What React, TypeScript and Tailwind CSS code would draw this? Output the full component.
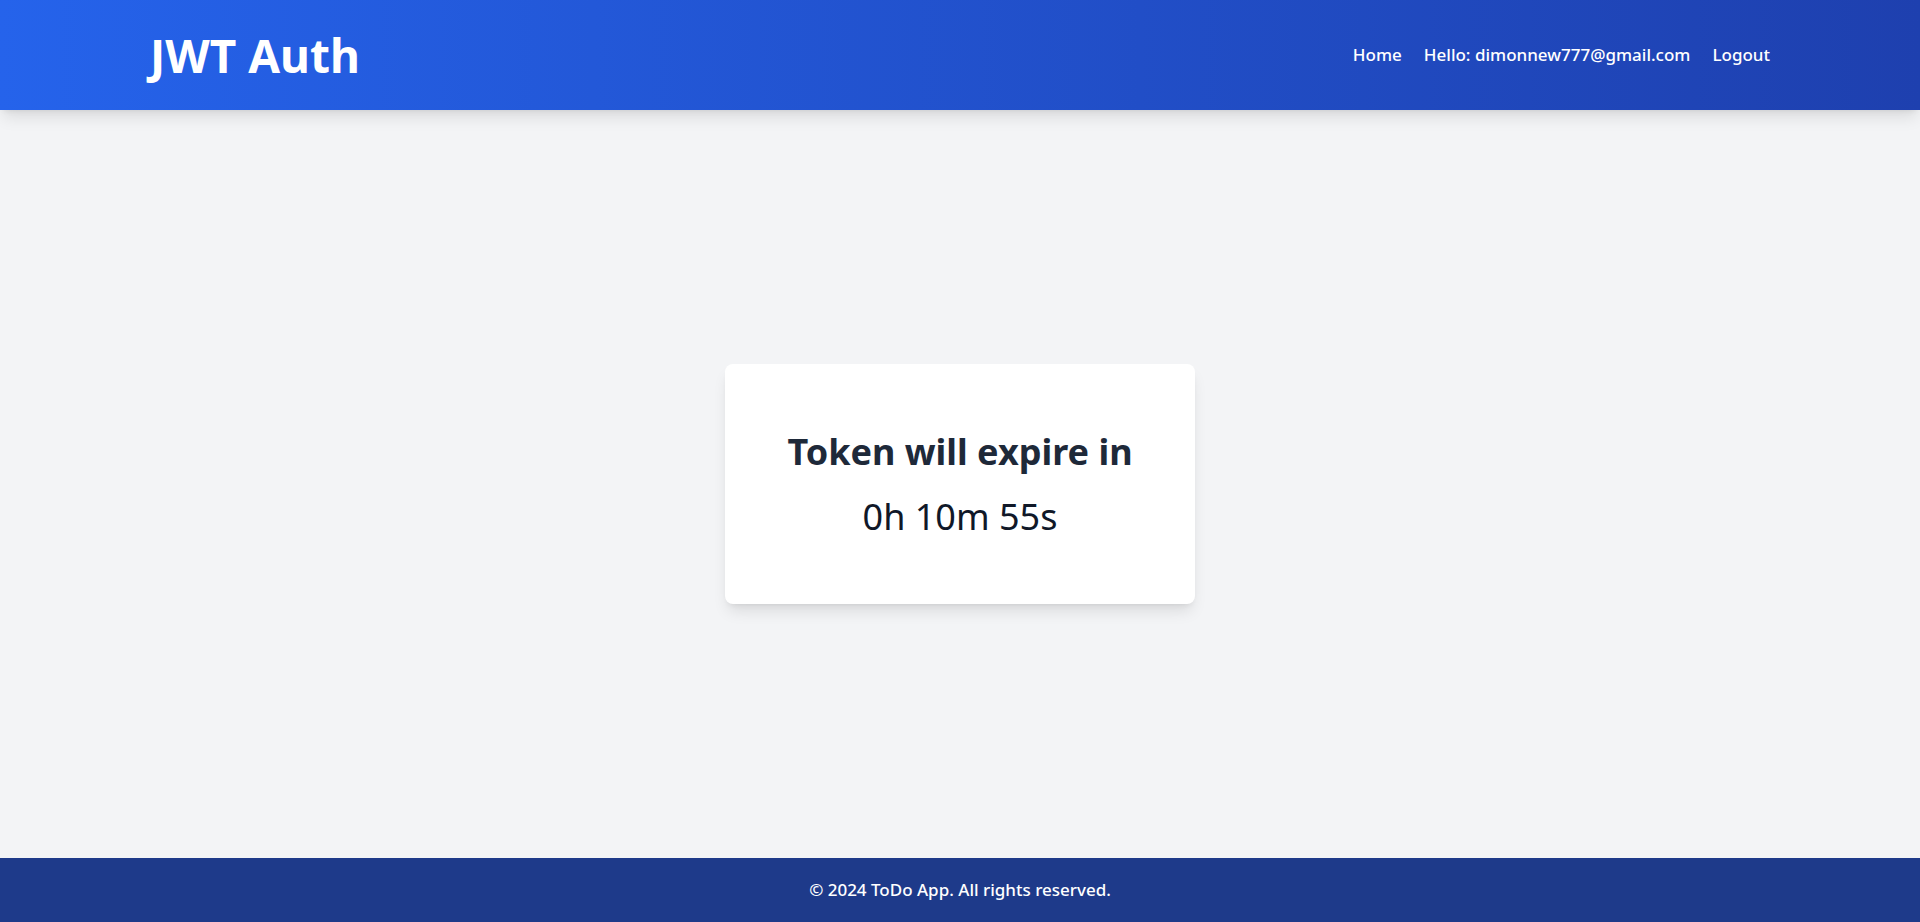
export default function App() {
  return (
    <div
      className="min-h-screen flex flex-col bg-gray-100"
      style={{ fontFamily: '"Noto Sans", "Open Sans", sans-serif' }}
    >
      {/* Header */}
      <header className="h-[110px] bg-gradient-to-r from-[#2563eb] to-[#1e40af] shadow-lg relative z-10">
        <div className="max-w-[1620px] mx-auto h-full flex items-center justify-between">
          <h1 className="text-[46px] font-bold text-white">JWT Auth</h1>
          <nav className="flex items-center gap-[22px] text-[17px] font-medium text-white">
            <a href="#">Home</a>
            <span>Hello: dimonnew777@gmail.com</span>
            <a href="#">Logout</a>
          </nav>
        </div>
      </header>

      {/* Main */}
      <main className="flex-1 flex items-center justify-center">
        <div className="w-[470px] h-[240px] bg-white rounded-lg shadow-lg flex flex-col items-center justify-center">
          <h2 className="text-[36px] font-bold text-gray-800 leading-tight">
            Token will expire in
          </h2>
          <p className="text-[36px] text-gray-900 mt-5 leading-tight">0h 10m 55s</p>
        </div>
      </main>

      {/* Footer */}
      <footer className="h-16 bg-[#1e3a8a] flex items-center justify-center">
        <p className="text-white text-[17px] font-medium">
          © 2024 ToDo App. All rights reserved.
        </p>
      </footer>
    </div>
  );
}
